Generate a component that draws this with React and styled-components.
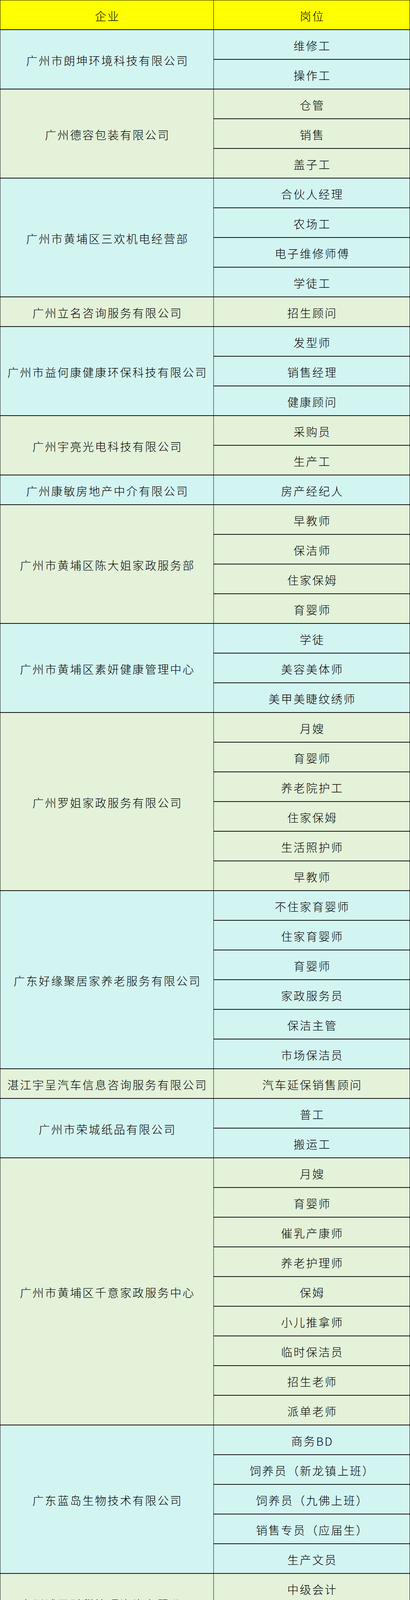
import styled, { createGlobalStyle } from "styled-components";

const groups = [
    { name: "广州市朗坤环境科技有限公司", jobs: ["维修工", "操作工"] },
    { name: "广州德容包装有限公司", jobs: ["仓管", "销售", "盖子工"] },
    { name: "广州市黄埔区三欢机电经营部", jobs: ["合伙人经理", "农场工", "电子维修师傅", "学徒工"] },
    { name: "广州立名咨询服务有限公司", jobs: ["招生顾问"] },
    { name: "广州市益何康健康环保科技有限公司", jobs: ["发型师", "销售经理", "健康顾问"] },
    { name: "广州宇亮光电科技有限公司", jobs: ["采购员", "生产工"] },
    { name: "广州康敏房地产中介有限公司", jobs: ["房产经纪人"] },
    { name: "广州市黄埔区陈大姐家政服务部", jobs: ["早教师", "保洁师", "住家保姆", "育婴师"] },
    { name: "广州市黄埔区素妍健康管理中心", jobs: ["学徒", "美容美体师", "美甲美睫纹绣师"] },
    { name: "广州罗姐家政服务有限公司", jobs: ["月嫂", "育婴师", "养老院护工", "住家保姆", "生活照护师", "早教师"] },
    { name: "广东好缘聚居家养老服务有限公司", jobs: ["不住家育婴师", "住家育婴师", "育婴师", "家政服务员", "保洁主管", "市场保洁员"] },
    { name: "湛江宇呈汽车信息咨询服务有限公司", jobs: ["汽车延保销售顾问"] },
    { name: "广州市荣城纸品有限公司", jobs: ["普工", "搬运工"] },
    { name: "广州市黄埔区千意家政服务中心", jobs: ["月嫂", "育婴师", "催乳产康师", "养老护理师", "保姆", "小儿推拿师", "临时保洁员", "招生老师", "派单老师"] },
    { name: "广东蓝岛生物技术有限公司", jobs: ["商务BD", "饲养员（新龙镇上班）", "饲养员（九佛上班）", "销售专员（应届生）", "生产文员"] },
    { name: "广州诚展财税管理咨询有限公司", jobs: ["中级会计", "初级会计"] },
    { name: "科美园（广州）智慧园区运营管理有\n限公司", jobs: ["置业顾问", "兼职地推", "保安员", "保洁员", "物业客服前台", "电工"] },
    { name: "广州市白云泵业集团有限公司", jobs: ["PMC副部长", "物料计划员", "投标报价", "律师/法务（账款清欠）", "行政助理", "行政司机", "测试普工", "质检员", "激光切割", "水泵装配工", "采购员"] },
];

const PALETTE = {
    header: "#ffff00",
    cyan: "#d3f5f2",
    green: "#e3f2d9",
    line: "#111111",
};

const GlobalStyle = createGlobalStyle`
	* { box-sizing: border-box; }
	html, body {
		margin: 0;
		padding: 0;
		background: #ffffff;
		font-family: "Noto Sans CJK SC", "Noto Sans", sans-serif;
		color: #000;
	}
`;

const Sheet = styled.div`
	width: 1049px;
	border-top: 1px solid ${PALETTE.line};
	border-left: 1px solid ${PALETTE.line};
	border-right: 1px solid ${PALETTE.line};
`;

const Row = styled.div`
	display: grid;
	grid-template-columns: 546px 1fr;
	background-color: ${({ $bg }) => $bg};
`;

const Cell = styled.div`
	display: flex;
	align-items: center;
	justify-content: center;
	text-align: center;
	height: ${({ $rows }) => ($rows || 1) * 76}px;
	overflow: hidden;
	padding: 3px 0 0 3px;
	border-bottom: 2px solid ${PALETTE.line};
	font-size: 29px;
	font-weight: 300;
	letter-spacing: 3px;
	line-height: 34px;
	white-space: pre-line;
`;

const NameCell = styled(Cell)`
	border-right: 1px solid ${PALETTE.line};
`;

const JobList = styled.div`
	display: flex;
	flex-direction: column;
`;

export default function App() {
    return (
        <>
            <GlobalStyle />
            <Sheet>
                <Row $bg={PALETTE.header}>
                    <NameCell>企业</NameCell>
                    <Cell>岗位</Cell>
                </Row>
                {groups.map((group, i) => (
                    <Row key={group.name} $bg={i % 2 === 0 ? PALETTE.cyan : PALETTE.green}>
                        <NameCell $rows={group.jobs.length}>{group.name}</NameCell>
                        <JobList>
                            {group.jobs.map((job, j) => (
                                <Cell key={j}>{job}</Cell>
                            ))}
                        </JobList>
                    </Row>
                ))}
            </Sheet>
        </>
    );
}
